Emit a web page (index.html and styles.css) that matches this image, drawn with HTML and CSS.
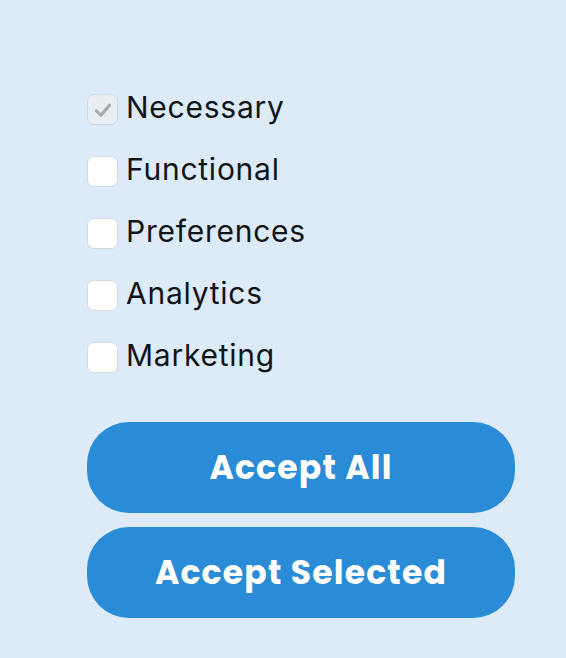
FILE: index.html
```html
<!DOCTYPE html>
<html>
<head>
<meta charset="utf-8">
<link rel="stylesheet" href="styles.css">
</head>
<body>
<div class="panel">
  <ul class="options">
    <li class="option"><span class="box checked"><svg viewBox="0 0 20 20" width="22" height="22"><path d="M4 10.8 L8.2 14.8 L16 5.5" fill="none" stroke="#a6a9ad" stroke-width="2.8" stroke-linecap="round" stroke-linejoin="round"/></svg></span><span class="label">Necessary</span></li>
    <li class="option"><span class="box"></span><span class="label">Functional</span></li>
    <li class="option"><span class="box"></span><span class="label">Preferences</span></li>
    <li class="option"><span class="box"></span><span class="label">Analytics</span></li>
    <li class="option"><span class="box"></span><span class="label">Marketing</span></li>
  </ul>
  <div class="actions">
    <button class="btn">Accept All</button>
    <button class="btn">Accept Selected</button>
  </div>
</div>
</body>
</html>
```
FILE: styles.css
```css
html, body {
  margin: 0;
  padding: 0;
  background: #dcebf7;
  width: 566px;
  height: 658px;
  overflow: hidden;
}
.panel {
  padding: 94px 51px 0 87px;
  display: flex;
  flex-direction: column;
}
.options {
  list-style: none;
  margin: 0;
  padding: 0;
  display: flex;
  flex-direction: column;
  gap: 31px;
}
.option {
  display: flex;
  align-items: center;
  height: 31px;
  gap: 8px;
}
.box {
  box-sizing: border-box;
  width: 31px;
  height: 31px;
  border-radius: 7px;
  background: #ffffff;
  border: 1px solid #d3d9df;
  display: flex;
  align-items: center;
  justify-content: center;
}
.box.checked {
  background: #e9eef3;
  border-color: #cfd6de;
}
.label {
  font-family: "Inter", "Noto Sans", sans-serif;
  font-size: 30px;
  color: #111418;
  letter-spacing: 0.75px;
  line-height: 32px;
  padding-bottom: 6px;
}
.actions {
  margin-top: 49px;
  display: flex;
  flex-direction: column;
  gap: 14px;
}
.btn {
  height: 91px;
  border: none;
  border-radius: 42px;
  background: #2a8bd6;
  color: #ffffff;
  font-family: "Poppins", "Lato", "Open Sans", sans-serif;
  font-weight: 700;
  font-size: 33px;
  letter-spacing: 1.2px;
  padding: 0;
  cursor: pointer;
}
```
